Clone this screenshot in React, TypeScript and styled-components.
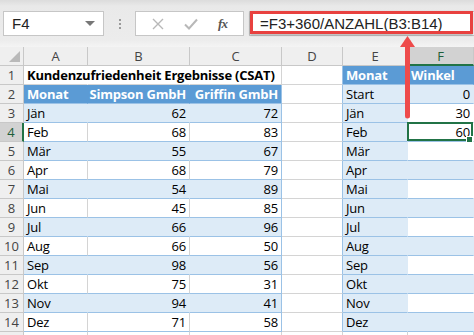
import styled, { createGlobalStyle } from "styled-components"

const GlobalStyle = createGlobalStyle`
  html, body {
    margin: 0;
    padding: 0;
    background: #ffffff;
  }
  * {
    box-sizing: border-box;
  }
`

const CELL_FONT = `"Open Sans", "Noto Sans", Arial, sans-serif`
const UI_FONT = `"Liberation Sans", Arial, sans-serif`

const Sheet = styled.div`
  --grid: #d4d4d4;
  --band: #ddebf7;
  --band-line: #9bc2e6;
  --head-blue: #5b9bd5;
  --excel-green: #217346;
  --hdr-bg: #efefef;
  --hdr-line: #c8c8c8;

  position: relative;
  width: 474px;
  height: 335px;
  overflow: hidden;
  background: #ffffff;
`

const FormulaBar = styled.div`
  height: 47px;
  display: flex;
  align-items: flex-start;
  padding: 11px 0 0 3px;
  background: linear-gradient(#dcdcdc 0px, #e9e9e9 6px, #ececec 40px, #f4f4f4 47px);
`

const NameBox = styled.div`
  width: 101px;
  height: 25px;
  display: flex;
  align-items: center;
  justify-content: space-between;
  padding: 0 8px 0 8px;
  background: #ffffff;
  border: 1px solid #c6c6c6;
  font-family: ${UI_FONT};
  font-size: 15px;
  color: #222;
`

const Caret = styled.span`
  width: 0;
  height: 0;
  border-left: 5px solid transparent;
  border-right: 5px solid transparent;
  border-top: 5px solid #777;
`

const Dots = styled.div`
  width: 31px;
  height: 25px;
  display: flex;
  flex-direction: column;
  align-items: center;
  justify-content: center;
  gap: 2px;

  span {
    width: 2px;
    height: 2px;
    background: #9a9a9a;
  }
`

const ActionBox = styled.div`
  width: 109px;
  height: 25px;
  display: flex;
  align-items: center;
  justify-content: space-around;
  padding: 0 6px;
  background: #ffffff;
  border: 1px solid #c6c6c6;
  color: #b5b5b5;
`

const Fx = styled.span`
  font-family: "Liberation Serif", serif;
  font-style: italic;
  font-weight: bold;
  font-size: 13px;
  color: #555;
  letter-spacing: -1px;
`

const FormulaInput = styled.div`
  flex: 1;
  margin-left: 5px;
  height: 25px;
  background: #ffffff;
  border: 1px solid #c6c6c6;
  border-right: none;
  position: relative;
  display: flex;
  align-items: center;
  padding-left: 10px;
  font-family: ${UI_FONT};
  font-size: 15px;
  color: #222;

  &::after {
    content: "";
    position: absolute;
    left: 0px;
    top: -1px;
    right: 1px;
    bottom: 1px;
    border: 3px solid #e8413f;
    box-shadow: 0 1px 2px rgba(0, 0, 0, 0.35);
  }
`

const Grid = styled.div`
  display: grid;
  grid-template-columns: 24px 64px 102px 92px 61px 65px 66px;
  grid-auto-rows: 19px;
`

const Corner = styled.div`
  position: relative;
  background: var(--hdr-bg);
  border-right: 1px solid var(--hdr-line);
  border-bottom: 1px solid var(--hdr-line);

  &::after {
    content: "";
    position: absolute;
    right: 3px;
    bottom: 3px;
    width: 0;
    height: 0;
    border-left: 11px solid transparent;
    border-bottom: 11px solid #b9b9b9;
  }
`

const ColHead = styled.div<{ $active?: boolean }>`
  display: flex;
  align-items: center;
  justify-content: center;
  font-family: ${CELL_FONT};
  font-size: 13px;
  color: ${(p) => (p.$active ? "#1e5e3a" : "#444")};
  background: ${(p) => (p.$active ? "#d2d2d2" : "var(--hdr-bg)")};
  border-right: 1px solid var(--hdr-line);
  border-bottom: ${(p) => (p.$active ? "2px solid var(--excel-green)" : "1px solid var(--hdr-line)")};
`

const RowHead = styled.div<{ $active?: boolean }>`
  display: flex;
  align-items: center;
  justify-content: center;
  font-family: ${CELL_FONT};
  font-size: 13px;
  color: ${(p) => (p.$active ? "#1e5e3a" : "#444")};
  background: ${(p) => (p.$active ? "#d2d2d2" : "var(--hdr-bg)")};
  border-right: ${(p) => (p.$active ? "2px solid var(--excel-green)" : "1px solid var(--hdr-line)")};
  border-bottom: 1px solid var(--hdr-line);
`

type Kind = "plain" | "title" | "head" | "band" | "white"

const fills: Record<Kind, string> = {
  plain: "#ffffff",
  title: "#ffffff",
  head: "var(--head-blue)",
  band: "var(--band)",
  white: "#ffffff",
}

const Cell = styled.div<{ $kind: Kind; $right?: boolean; $edgeR?: boolean; $noR?: boolean }>`
  position: relative;
  display: flex;
  align-items: center;
  justify-content: ${(p) => (p.$right ? "flex-end" : "flex-start")};
  padding: 0 3px;
  white-space: nowrap;
  overflow: visible;
  font-family: ${CELL_FONT};
  font-size: 13px;
  letter-spacing: -0.2px;
  font-weight: ${(p) => (p.$kind === "title" || p.$kind === "head" ? 700 : 400)};
  color: ${(p) => (p.$kind === "head" ? "#ffffff" : "#000000")};
  background: ${(p) => fills[p.$kind]};
  border-bottom: 1px solid
    ${(p) => (p.$kind === "band" || p.$kind === "white" || p.$kind === "head" ? "var(--band-line)" : "var(--grid)")};
  border-right: 1px solid
    ${(p) =>
      p.$edgeR
        ? "var(--band-line)"
        : p.$noR
        ? p.$kind === "plain" || p.$kind === "title"
          ? "#ffffff"
          : fills[p.$kind]
        : "var(--grid)"};
  z-index: ${(p) => (p.$kind === "title" ? 1 : 0)};
`

const Selected = styled.div`
  position: absolute;
  inset: -1px 0 0 -1px;
  border: 2px solid var(--excel-green);
  pointer-events: none;

  &::after {
    content: "";
    position: absolute;
    right: -2px;
    bottom: -4px;
    width: 5px;
    height: 5px;
    background: var(--excel-green);
    border: 1px solid #ffffff;
  }
`

const Arrow = styled.svg`
  position: absolute;
  left: 398px;
  top: 36px;
  overflow: visible;
`

const months = ["Jän", "Feb", "Mär", "Apr", "Mai", "Jun", "Jul", "Aug", "Sep", "Okt", "Nov", "Dez"]
const simpson = [62, 68, 55, 68, 54, 45, 66, 66, 98, 75, 94, 71]
const griffin = [72, 83, 67, 79, 89, 85, 96, 50, 56, 31, 41, 58]
const winkel: Record<number, string> = { 0: "0", 1: "30", 2: "60" }
// F column fill per table-2 row (Start .. Dez)
const fBand = [true, false, false, false, true, false, true, false, true, false, true, false, true]

const App = () => {
  const cols = ["A", "B", "C", "D", "E", "F"]

  const rows = []
  // row 1
  rows.push(
    <RowHead key="h1">1</RowHead>,
    <Cell key="a1" $kind="title" $noR>Kundenzufriedenheit Ergebnisse (CSAT)</Cell>,
    <Cell key="b1" $kind="plain" $noR />,
    <Cell key="c1" $kind="plain" />,
    <Cell key="d1" $kind="plain" $edgeR />,
    <Cell key="e1" $kind="head" $noR>Monat</Cell>,
    <Cell key="f1" $kind="head" $noR>Winkel</Cell>
  )
  // row 2
  rows.push(
    <RowHead key="h2">2</RowHead>,
    <Cell key="a2" $kind="head" $noR>Monat</Cell>,
    <Cell key="b2" $kind="head" $noR $right>Simpson GmbH</Cell>,
    <Cell key="c2" $kind="head" $edgeR $right>Griffin GmbH</Cell>,
    <Cell key="d2" $kind="plain" $edgeR />,
    <Cell key="e2" $kind="band" $noR>Start</Cell>,
    <Cell key="f2" $kind="band" $noR $right>0</Cell>
  )
  months.forEach((m, i) => {
    const r = i + 3
    const band = i % 2 === 0
    const k: Kind = band ? "band" : "white"
    const fk: Kind = fBand[i + 1] ? "band" : "white"
    rows.push(
      <RowHead key={`h${r}`} $active={r === 4}>{r}</RowHead>,
      <Cell key={`a${r}`} $kind={k} $noR={band}>{m}</Cell>,
      <Cell key={`b${r}`} $kind={k} $noR={band} $right>{simpson[i]}</Cell>,
      <Cell key={`c${r}`} $kind={k} $edgeR $right>{griffin[i]}</Cell>,
      <Cell key={`d${r}`} $kind="plain" $edgeR />,
      <Cell key={`e${r}`} $kind="band" $noR>{months[i]}</Cell>,
      <Cell key={`f${r}`} $kind={fk} $noR $right>
        {winkel[i + 1] ?? ""}
        {r === 4 && <Selected />}
      </Cell>
    )
  })
  // partially visible row 15 (only its top edge shows)
  rows.push(
    <RowHead key="h15" />,
    <Cell key="a15" $kind="plain" />,
    <Cell key="b15" $kind="plain" />,
    <Cell key="c15" $kind="plain" />,
    <Cell key="d15" $kind="plain" />,
    <Cell key="e15" $kind="plain" />,
    <Cell key="f15" $kind="plain" />
  )

  return (
    <>
      <GlobalStyle />
      <Sheet>
        <FormulaBar>
          <NameBox>
            F4
            <Caret />
          </NameBox>
          <Dots>
            <span />
            <span />
            <span />
          </Dots>
          <ActionBox>
            <svg width="12" height="12" viewBox="0 0 12 12">
              <path d="M1 1 L11 11 M11 1 L1 11" stroke="#b8b8b8" strokeWidth="1.4" fill="none" />
            </svg>
            <svg width="14" height="12" viewBox="0 0 14 12">
              <path d="M1 6.5 L5 10.5 L13 1.5" stroke="#b8b8b8" strokeWidth="2" fill="none" />
            </svg>
            <Fx>fx</Fx>
          </ActionBox>
          <FormulaInput>=F3+360/ANZAHL(B3:B14)</FormulaInput>
        </FormulaBar>
        <Grid>
          <Corner />
          {cols.map((c) => (
            <ColHead key={c} $active={c === "F"}>{c}</ColHead>
          ))}
          {rows}
        </Grid>
        <Arrow width="18" height="84" viewBox="0 0 18 84">
          <path d="M9.5 0 L17 11 L2 11 Z" fill="#ee4b4b" />
          <line x1="9.5" y1="9" x2="9.5" y2="80" stroke="#ee4b4b" strokeWidth="5" strokeLinecap="round" />
        </Arrow>
      </Sheet>
    </>
  )
}

export default App
